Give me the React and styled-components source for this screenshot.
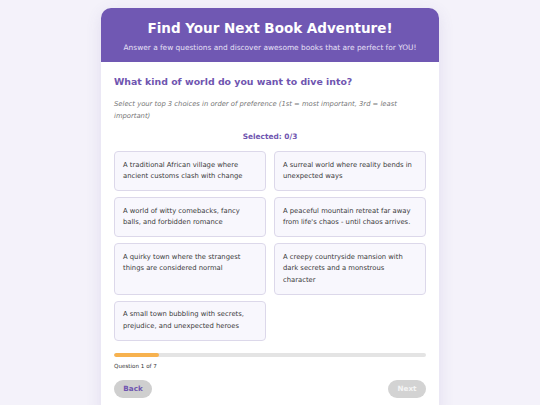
import React from "react";
import styled, { createGlobalStyle } from "styled-components";

const Global = createGlobalStyle`
  html, body { margin: 0; padding: 0; }
  body {
    background: #f4f2fa;
    font-family: "DejaVu Sans", Verdana, sans-serif;
  }
  * { box-sizing: border-box; }
`;

const Page = styled.div`
  display: flex;
  justify-content: center;
  padding-top: 8px;
`;

const Card = styled.div`
  width: 338px;
  background: #ffffff;
  border-radius: 10px;
  box-shadow: 0 4px 16px rgba(90, 70, 160, 0.12);
  overflow: hidden;
`;

const Header = styled.div`
  background: #7058b3;
  color: #fff;
  text-align: center;
  padding: 10px 10px 9px;
`;

const Title = styled.h1`
  margin: 0;
  font-size: 13.5px;
  font-weight: bold;
  line-height: 20px;
`;

const Subtitle = styled.p`
  margin: 5px 0 0;
  font-size: 7.4px;
  color: #e6e0f6;
  line-height: 10px;
`;

const Body = styled.div`
  padding: 12px 13px 20px;
`;

const Question = styled.h2`
  margin: 0;
  font-size: 9.4px;
  font-weight: bold;
  color: #6f55b0;
  line-height: 16px;
`;

const Instructions = styled.p`
  margin: 8px 0 0;
  font-size: 6.8px;
  font-style: italic;
  color: #777;
  line-height: 12px;
`;

const Counter = styled.div`
  margin-top: 9px;
  text-align: center;
  font-size: 7.4px;
  font-weight: bold;
  color: #6f55b0;
  line-height: 12px;
`;

const Grid = styled.div`
  margin-top: 8px;
  display: grid;
  grid-template-columns: 1fr 1fr;
  gap: 6px 8px;
`;

const Option = styled.button`
  text-align: left;
  background: #f8f7fd;
  border: 1px solid #dcd8ea;
  border-radius: 4px;
  padding: 7.5px 8px;
  font-family: inherit;
  font-size: 6.8px;
  line-height: 11.5px;
  color: #3a3a3a;
  display: flex;
  align-items: flex-start;
`;

const Progress = styled.div`
  margin-top: 12px;
  height: 4px;
  border-radius: 2px;
  background: #e4e4e4;
  overflow: hidden;
`;

const Fill = styled.div`
  height: 100%;
  background: #f7b24f;
  border-radius: 2px;
`;

const ProgressLabel = styled.div`
  margin-top: 4px;
  font-size: 5.6px;
  color: #333;
  line-height: 10px;
`;

const Nav = styled.div`
  margin-top: 9px;
  display: flex;
  justify-content: space-between;
`;

const NavButton = styled.button`
  height: 18px;
  width: 38px;
  padding: 0;
  border: none;
  border-radius: 9px;
  background: ${(p) => (p.$disabled ? "#d3d3d3" : "#cfcfcf")};
  color: ${(p) => (p.$disabled ? "#f4f4f4" : "#6f55b0")};
  font-family: inherit;
  font-size: 7.2px;
  font-weight: bold;
`;

const options = [
  "A traditional African village where ancient customs clash with change",
  "A surreal world where reality bends in unexpected ways",
  "A world of witty comebacks, fancy balls, and forbidden romance",
  "A peaceful mountain retreat far away from life's chaos - until chaos arrives.",
  "A quirky town where the strangest things are considered normal",
  "A creepy countryside mansion with dark secrets and a monstrous character",
  "A small town bubbling with secrets, prejudice, and unexpected heroes",
];

export default function App() {
  const step = 1;
  const total = 7;
  return (
    <>
      <Global />
      <Page>
        <Card>
          <Header>
            <Title>Find Your Next Book Adventure!</Title>
            <Subtitle>
              Answer a few questions and discover awesome books that are perfect for YOU!
            </Subtitle>
          </Header>
          <Body>
            <Question>What kind of world do you want to dive into?</Question>
            <Instructions>
              Select your top 3 choices in order of preference (1st = most important, 3rd = least
              important)
            </Instructions>
            <Counter>Selected: 0/3</Counter>
            <Grid>
              {options.map((o) => (
                <Option key={o}>{o}</Option>
              ))}
            </Grid>
            <Progress>
              <Fill style={{ width: `${(step / total) * 100}%` }} />
            </Progress>
            <ProgressLabel>
              Question {step} of {total}
            </ProgressLabel>
            <Nav>
              <NavButton>Back</NavButton>
              <NavButton $disabled>Next</NavButton>
            </Nav>
          </Body>
        </Card>
      </Page>
    </>
  );
}
